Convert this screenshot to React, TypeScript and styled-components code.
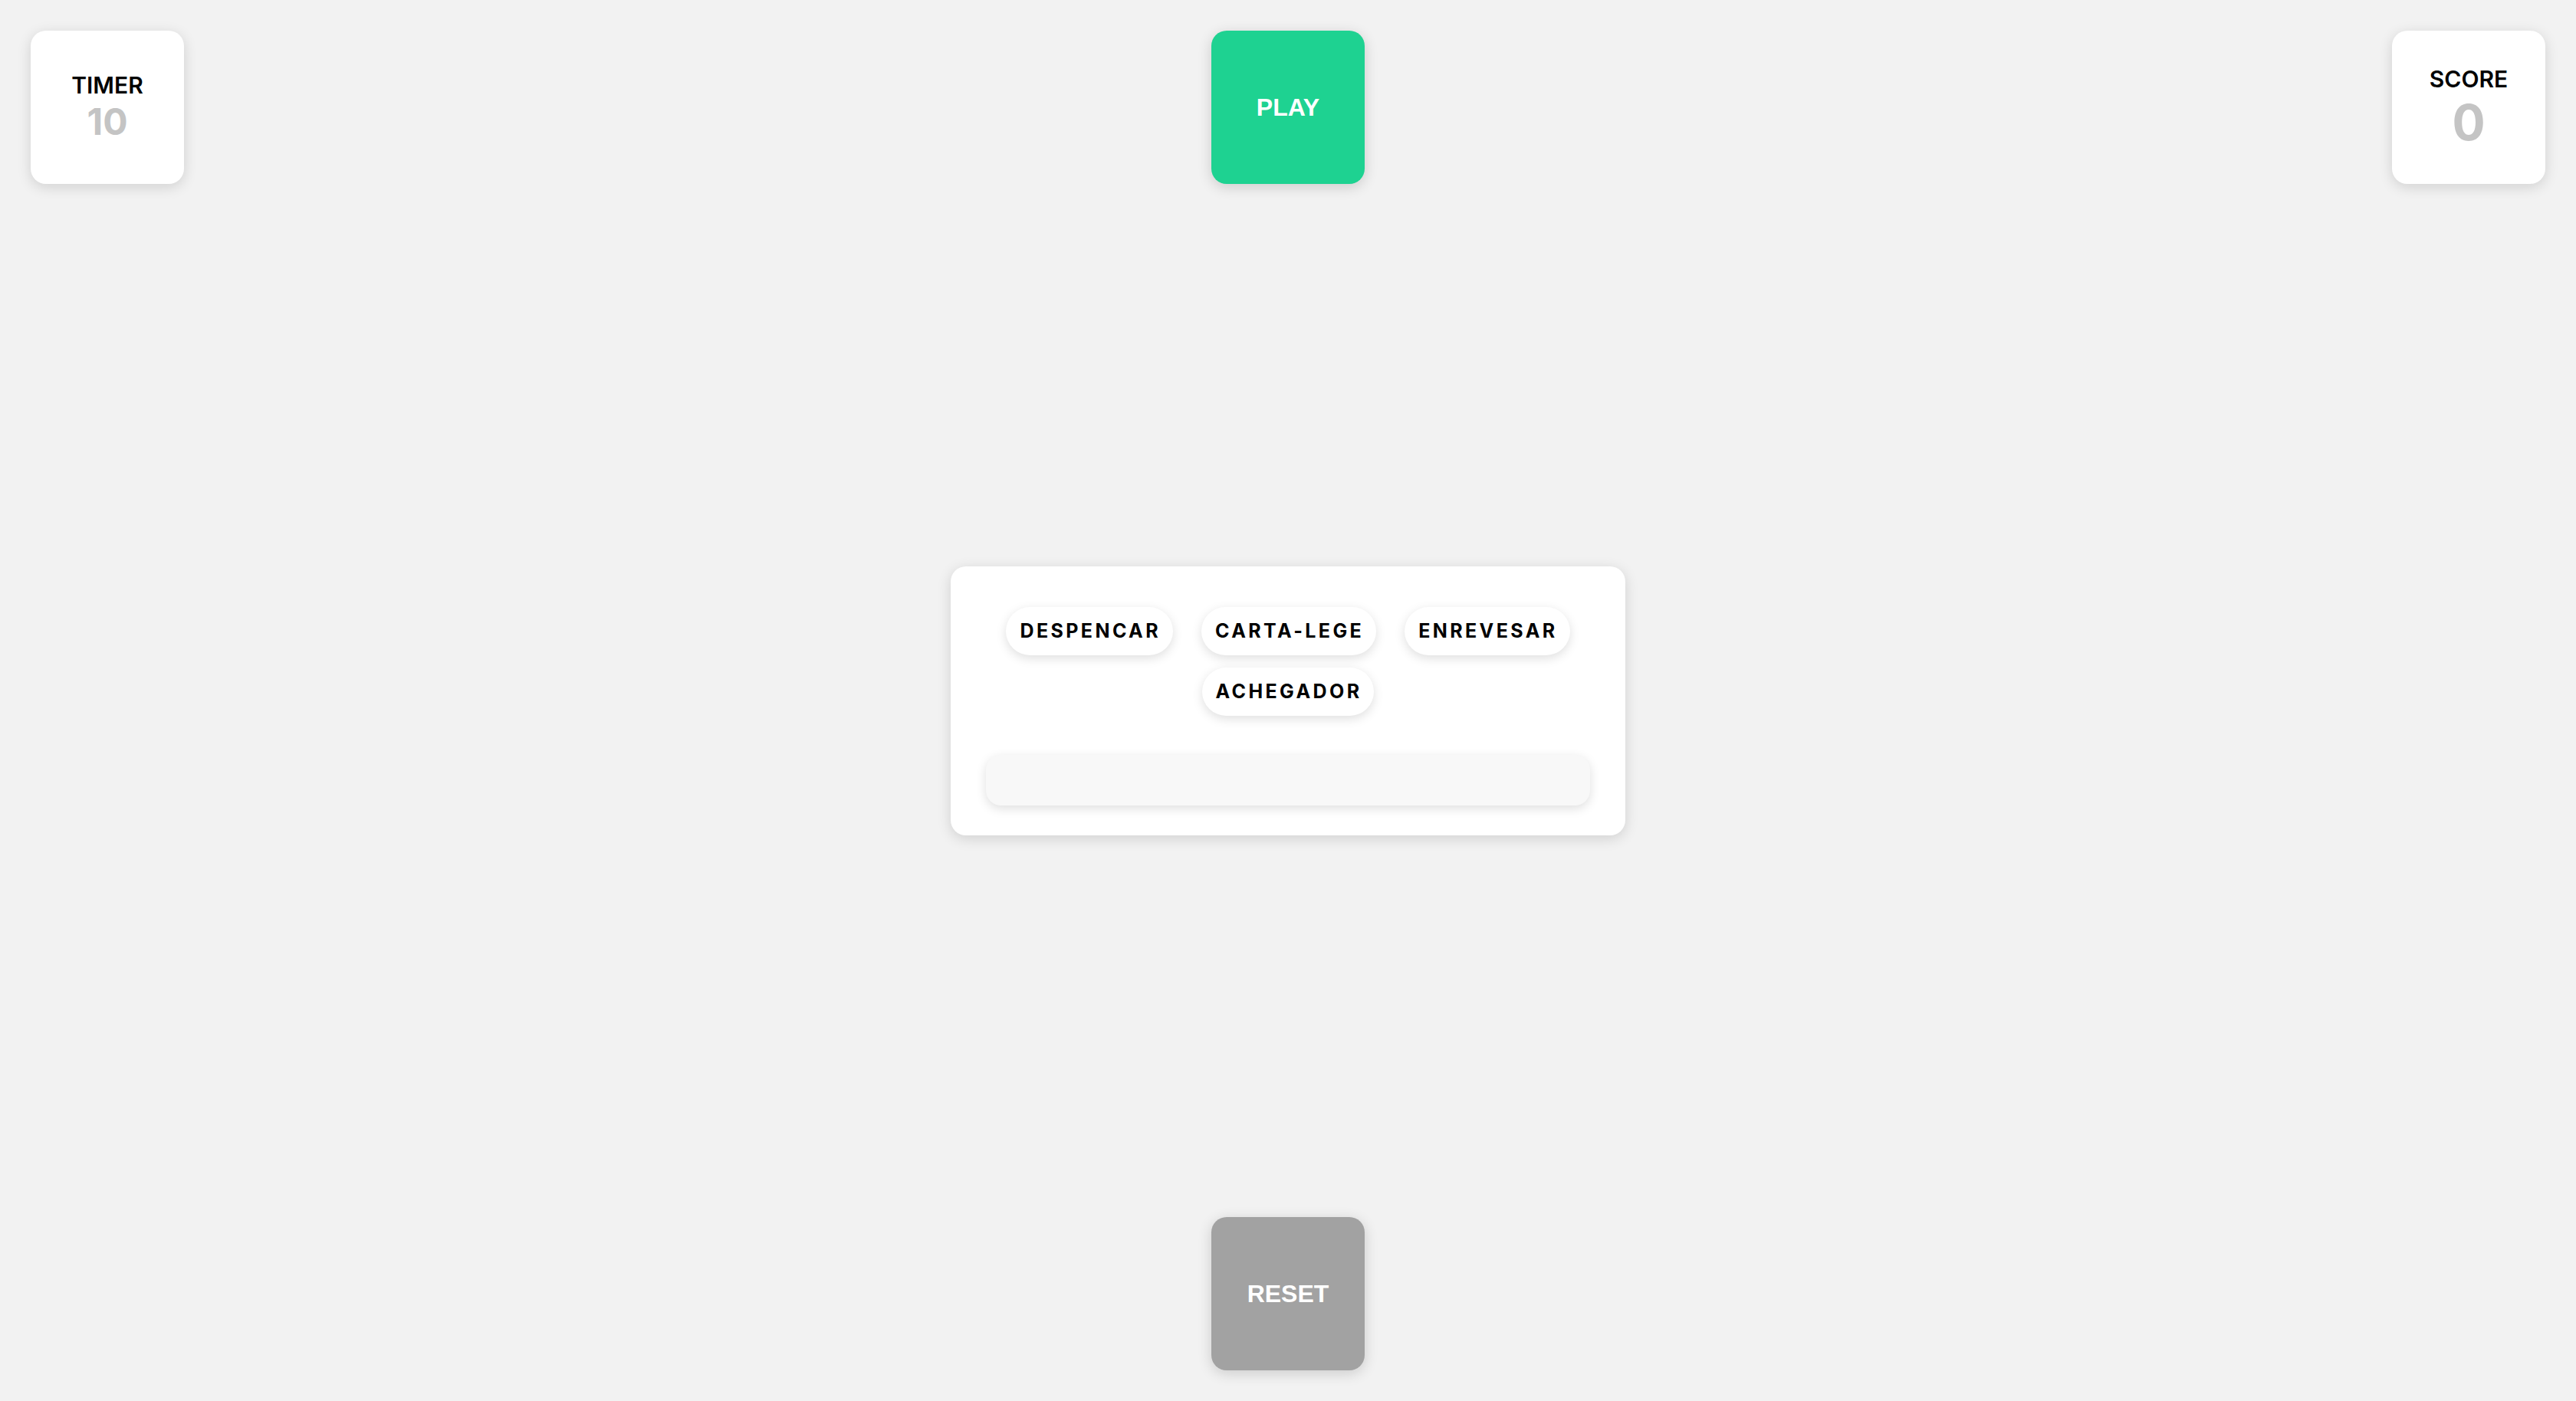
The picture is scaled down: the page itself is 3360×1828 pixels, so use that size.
import styled, { createGlobalStyle } from "styled-components";

const words = ["DESPENCAR", "CARTA-LEGE", "ENREVESAR", "ACHEGADOR"];

const App = () => {
  return (
    <>
      <GlobalStyle />
      <Page>
        {/* 상단: 타이머 / 플레이 / 점수 */}
        <TopBar>
          <StatBox>
            <StatLabel>TIMER</StatLabel>
            <StatValue size={48}>10</StatValue>
          </StatBox>
          <ActionButton tone="#1ed291">PLAY</ActionButton>
          <StatBox>
            <StatLabel>SCORE</StatLabel>
            <StatValue size={64}>0</StatValue>
          </StatBox>
        </TopBar>

        {/* 가운데: 단어 카드 */}
        <Middle>
          <Card>
            <WordList>
              {words.map((w) => (
                <WordChip key={w}>{w}</WordChip>
              ))}
            </WordList>
            <AnswerInput type="text" />
          </Card>
        </Middle>

        {/* 하단: 리셋 */}
        <BottomBar>
          <ActionButton tone="#a2a2a2">RESET</ActionButton>
        </BottomBar>
      </Page>
    </>
  );
};

const GlobalStyle = createGlobalStyle`
  * {
    box-sizing: border-box;
  }
  html, body {
    margin: 0;
    padding: 0;
    background: #f2f2f2;
    font-family: Inter, "Noto Sans", sans-serif;
  }
`;

const Page = styled.div`
  height: 100vh;
  padding: 40px;
  display: grid;
  grid-template-rows: auto 1fr auto;
`;

const TopBar = styled.div`
  display: flex;
  justify-content: space-between;
  align-items: flex-start;
`;

const StatBox = styled.div`
  width: 200px;
  height: 200px;
  background: #ffffff;
  border-radius: 20px;
  box-shadow: 0 4px 18px rgba(0, 0, 0, 0.14);
  display: flex;
  flex-direction: column;
  align-items: center;
  justify-content: center;
`;

const StatLabel = styled.div`
  font-size: 30px;
  font-weight: 600;
  color: #000;
  line-height: 1.1;
`;

const StatValue = styled.div<{ size: number }>`
  margin-top: 6px;
  font-size: ${(p) => p.size}px;
  font-weight: 700;
  color: #c4c4c4;
  line-height: 1.05;
`;

const ActionButton = styled.button<{ tone: string }>`
  width: 200px;
  height: 200px;
  border: none;
  border-radius: 20px;
  background: ${(p) => p.tone};
  color: #ffffff;
  font-family: "Liberation Sans", Arial, sans-serif;
  font-size: 32px;
  font-weight: 700;
  box-shadow: 0 4px 18px rgba(0, 0, 0, 0.16);
  cursor: pointer;
`;

const Middle = styled.div`
  display: flex;
  align-items: center;
  justify-content: center;
`;

const Card = styled.div`
  width: 880px;
  padding: 53px 46px 39px;
  background: #ffffff;
  border-radius: 20px;
  box-shadow: 0 4px 18px rgba(0, 0, 0, 0.14);
`;

const WordList = styled.div`
  display: flex;
  flex-wrap: wrap;
  justify-content: center;
  gap: 16px 37px;
`;

const WordChip = styled.div`
  height: 63px;
  padding: 0 16px 0 18px;
  display: flex;
  align-items: center;
  background: #ffffff;
  border-radius: 32px;
  box-shadow: 0 4px 14px rgba(0, 0, 0, 0.13);
  font-size: 25px;
  font-weight: 700;
  letter-spacing: 3.4px;
  color: #000;
`;

const AnswerInput = styled.input`
  display: block;
  width: 100%;
  height: 66px;
  margin-top: 51px;
  border: none;
  outline: none;
  border-radius: 20px;
  background: #f8f8f8;
  box-shadow: 0 4px 14px rgba(0, 0, 0, 0.13);
  font-size: 26px;
  padding: 0 20px;
`;

const BottomBar = styled.div`
  display: flex;
  justify-content: center;
`;

export default App;
